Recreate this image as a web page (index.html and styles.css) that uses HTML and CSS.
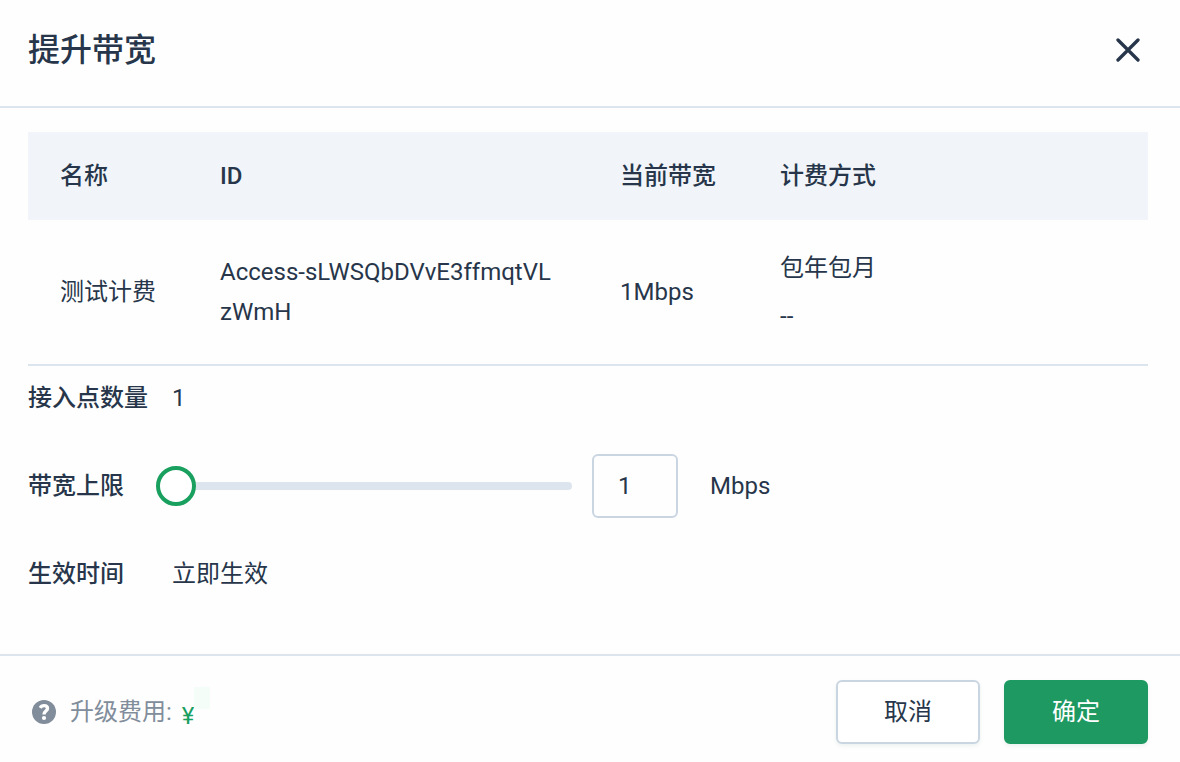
FILE: index.html
```html
<!DOCTYPE html>
<html lang="zh-CN">
<head>
<meta charset="utf-8">
<title>提升带宽</title>
<link rel="stylesheet" href="styles.css">
</head>
<body>
<div class="dialog">
  <header class="dialog-header">
    <h1 class="dialog-title">提升带宽</h1>
    <button class="close" aria-label="关闭">
      <svg width="24" height="24" viewBox="0 0 24 24"><path d="M2 2 22 22M22 2 2 22"/></svg>
    </button>
  </header>
  <main class="dialog-body">
    <div class="table">
      <div class="row head">
        <div>名称</div><div>ID</div><div>当前带宽</div><div>计费方式</div>
      </div>
      <div class="row data">
        <div>测试计费</div>
        <div class="id">Access-sLWSQbDVvE3ffmqtVL<br>zWmH</div>
        <div>1Mbps</div>
        <div class="billing"><div>包年包月</div><div>--</div></div>
      </div>
    </div>
    <div class="field count">
      <div class="label">接入点数量</div>
      <div class="value">1</div>
    </div>
    <div class="field limit">
      <div class="label">带宽上限</div>
      <div class="slider"><span class="thumb"></span><span class="track"></span></div>
      <div class="number">1</div>
      <div class="unit">Mbps</div>
    </div>
    <div class="field">
      <div class="label">生效时间</div>
      <div class="value">立即生效</div>
    </div>
  </main>
  <footer class="dialog-footer">
    <svg class="help" width="24" height="24" viewBox="0 0 24 24"><circle cx="12" cy="12" r="12"/><path d="M8.2 7.9C9 6.4 10.4 5.6 12.1 5.6C14.3 5.6 15.5 6.8 15.5 8.5C15.5 11 12 11.2 12 14.4"/><circle class="dot" cx="12" cy="18" r="2.1"/></svg>
    <span class="fee-label">升级费用:</span>
    <span class="currency">¥</span>
    <span class="patch"></span>
    <button class="btn">取消</button>
    <button class="btn primary">确定</button>
  </footer>
</div>
</body>
</html>
```
FILE: styles.css
```css
* { box-sizing: border-box; }

body {
  margin: 0;
  background: #fefefe;
  color: #27364a;
  font: 24px/40px Roboto, "Noto Sans CJK SC", sans-serif;
}

.dialog {
  display: flex;
  flex-direction: column;
  height: 762px;
  overflow: hidden;
}

.dialog-header {
  display: flex;
  justify-content: space-between;
  align-items: flex-start;
  height: 108px;
  padding: 30px 40px 0 28px;
  border-bottom: 2px solid #dce5ed;
}

.dialog-title {
  margin: 0;
  font-size: 32px;
  font-weight: 500;
  line-height: 40px;
}

.close {
  display: flex;
  margin: 8px 0 0;
  padding: 0;
  border: 0;
  background: none;
}

.close path {
  fill: none;
  stroke: #27364a;
  stroke-width: 3.3;
  stroke-linecap: round;
}

.dialog-body {
  flex: 1;
  padding: 24px 32px 0 28px;
}

.row {
  display: grid;
  grid-template-columns: 160px 400px 160px 1fr;
  align-items: center;
  padding: 0 32px;
}

.head {
  height: 88px;
  background: #f1f5f9;
  font-weight: 500;
}

.data {
  height: 146px;
  border-bottom: 2px solid #dce5ed;
}

.billing { line-height: 48px; }

.field {
  display: flex;
  align-items: center;
  height: 64px;
}

.field.count { margin-bottom: 24px; }

.field.limit { margin-bottom: 24px; }

.label {
  width: 128px;
  font-weight: 500;
}

.value { padding-left: 16px; }

.slider {
  display: flex;
  align-items: center;
  width: 416px;
}

.thumb {
  width: 40px;
  height: 40px;
  border: 4px solid #19a05f;
  border-radius: 50%;
  background: #fff;
}

.track {
  flex: 1;
  height: 8px;
  border-radius: 0 4px 4px 0;
  background: #dce5ed;
}

.number {
  width: 86px;
  height: 64px;
  margin: 0 32px 0 20px;
  padding-left: 24px;
  border: 2px solid #cad5e2;
  border-radius: 6px;
  line-height: 60px;
}

.dialog-footer {
  display: flex;
  align-items: center;
  height: 108px;
  padding: 6px 32px 0;
  border-top: 2px solid #dce5ed;
}

.help { fill: #818d9b; }

.help path {
  fill: none;
  stroke: #fff;
  stroke-width: 3.4;
}

.help .dot { fill: #fff; }

.fee-label {
  margin-left: 14px;
  color: #818d9b;
}

.currency {
  margin: 7px 0 0 10px;
  color: #19a05f;
}

.patch {
  width: 16px;
  height: 22px;
  margin: 0 auto 29px 0;
  background: #f4fdf8;
}

.btn {
  width: 144px;
  height: 64px;
  padding: 0;
  border: 2px solid #cad5e2;
  border-radius: 6px;
  background: #fff;
  box-shadow: 0 2px 4px rgba(25, 100, 70, .08);
  color: inherit;
  font: inherit;
}

.primary {
  margin-left: 24px;
  border-color: #1e9962;
  background: #1e9962;
  color: #fff;
}
```
